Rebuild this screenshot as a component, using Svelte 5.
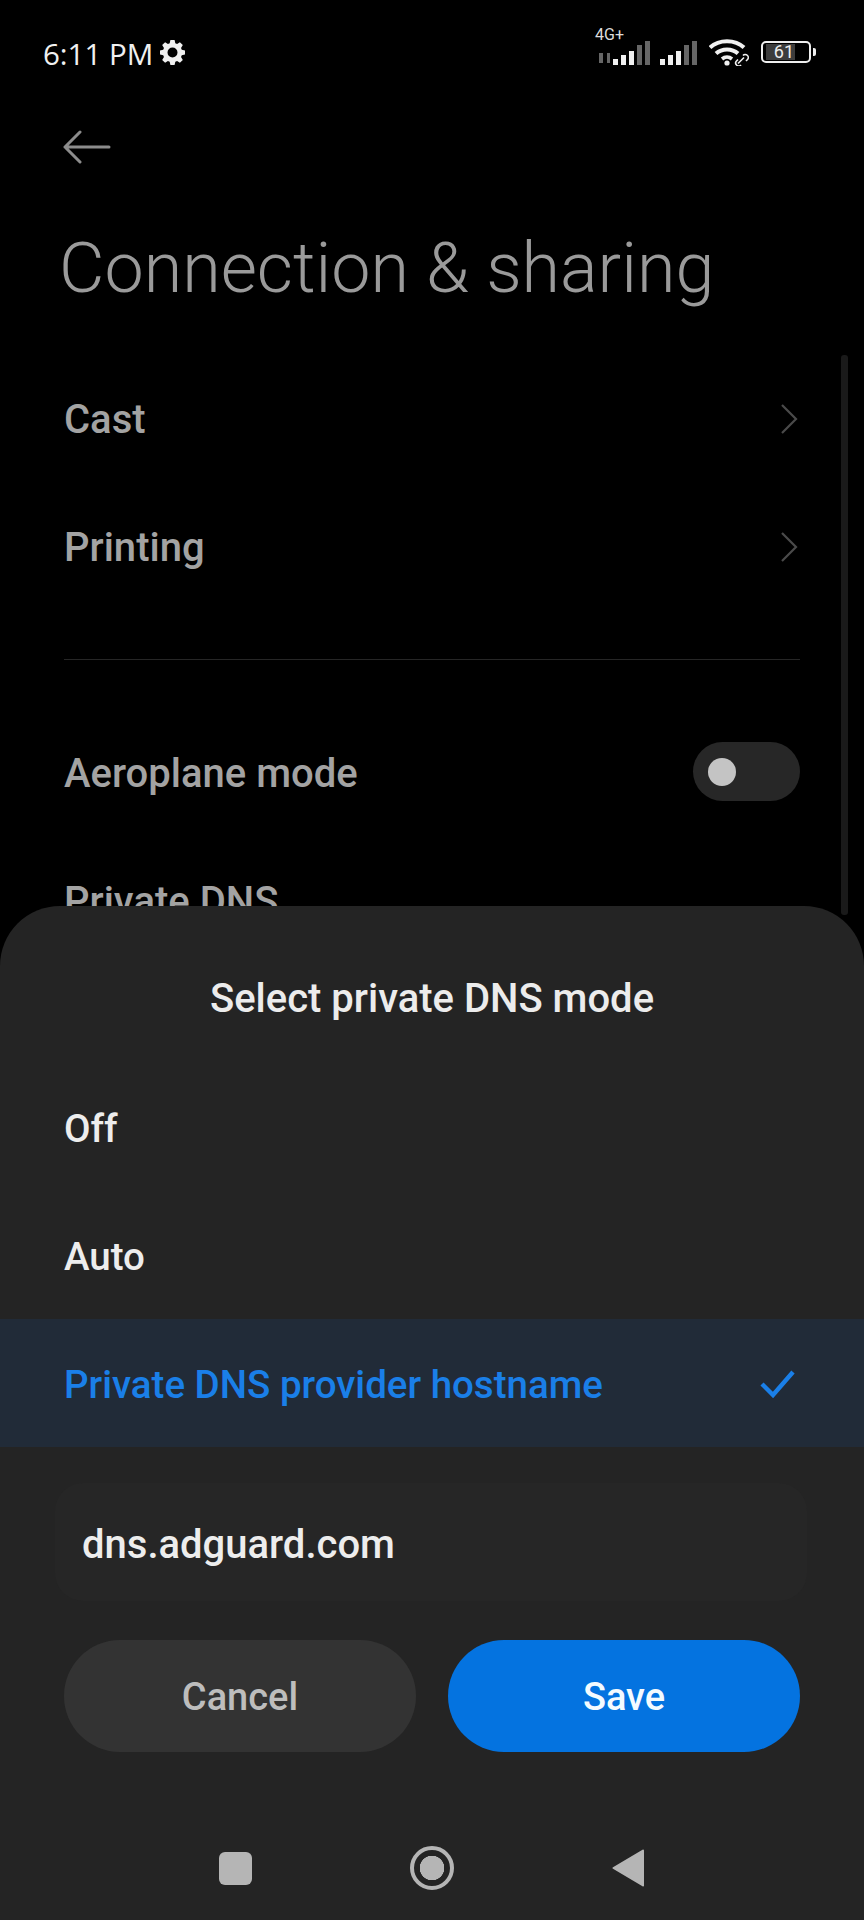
<script>
	const rows = [{ label: 'Cast' }, { label: 'Printing' }];
	const modes = [
		{ label: 'Off', selected: false },
		{ label: 'Auto', selected: false },
		{ label: 'Private DNS provider hostname', selected: true }
	];
	const bars = [6, 10, 14, 20, 24];
</script>

<div class="screen">
	<header class="status">
		<span class="time">6:11 PM</span>
		<svg class="gear" width="25" height="25" viewBox="0 0 24 24" fill="#f0f0f0">
			<path
				fill-rule="evenodd"
				d="M10 0h4l.7 3.100 1.700.7 2.700-1.700 2.800 2.800-1.700 2.700.7 1.700L24 10v4l-3.100.7-.7 1.700 1.700 2.700-2.800 2.800-2.700-1.700-1.700.7L14 24h-4l-.7-3.100-1.700-.7-2.700 1.700-2.800-2.800 1.700-2.700-.7-1.700L0 14v-4l3.100-.7.7-1.700L2.100 4.900l2.800-2.800 2.700 1.700 1.700-.7L10 0zM12 7.200a4.800 4.800 0 1 0 0 9.600a4.800 4.800 0 0 0 0-9.600z"
			/>
		</svg>
		<div class="status-right">
			<div class="signal">
				<span class="net">4G+</span>
				<svg class="arrows" width="15" height="12" viewBox="0 0 15 12" fill="#666">
					<rect x="1" y="1" width="4" height="10" />
					<rect x="9" y="1" width="3" height="10" />
				</svg>
				<div class="bars">
					{#each bars as h, i}
						<i class:dim={i > 2} style="height: {h}px"></i>
					{/each}
				</div>
			</div>
			<div class="bars second">
				{#each bars as h, i}
					<i class:dim={i > 2} style="height: {h}px"></i>
				{/each}
			</div>
			<svg class="wifi" width="40" height="28" viewBox="0 0 40 28" fill="none" stroke="#f0f0f0">
				<path d="M1 9.500C10 1 26 1 35 9.500" stroke-width="4" />
				<path d="M7 15.500C13 10 23 10 29 15.500" stroke-width="4" />
				<path d="M13 21C16 18.500 20 18.500 23 21" stroke-width="3.600" />
				<circle cx="18" cy="25" r="2.600" fill="#f0f0f0" stroke="none" />
				<path d="M29 25.500l6-6M32 27a3 3 0 0 1-4.500-4l1.500-1.500M34 17.500a3 3 0 0 1 4.500 4L37 23" stroke-width="1.600" />
			</svg>
			<div class="battery">
				<div class="cell"><span>61</span></div>
				<i class="nub"></i>
			</div>
		</div>
	</header>

	<main class="page">
		<button class="back" aria-label="Back">
			<svg width="48" height="34" viewBox="0 0 48 34" fill="none" stroke="#8c8c8c" stroke-width="3" stroke-linecap="round" stroke-linejoin="round">
				<path d="M2 17h44M17 2L2 17l15 15" />
			</svg>
		</button>
		<h1>Connection &amp; sharing</h1>

		<section class="list">
			{#each rows as row}
				<div class="row">
					<span>{row.label}</span>
					<svg width="20" height="32" viewBox="0 0 20 32" fill="none" stroke="#4a4a4a" stroke-width="2.200">
						<path d="M3 2l14 14L3 30" />
					</svg>
				</div>
			{/each}
		</section>

		<hr />

		<section class="list">
			<div class="row">
				<span>Aeroplane mode</span>
				<div class="toggle"><i></i></div>
			</div>
			<div class="row"><span>Private DNS</span></div>
		</section>
	</main>

	<i class="scrollbar"></i>

	<div class="sheet">
		<h2>Select private DNS mode</h2>
		<div class="modes">
			{#each modes as mode}
				<div class="mode" class:selected={mode.selected}>
					<span>{mode.label}</span>
					{#if mode.selected}
						<svg width="36" height="28" viewBox="0 0 36 28" fill="none" stroke="#1a7fe8" stroke-width="4.400">
							<path d="M2 14l11 11L33 2" />
						</svg>
					{/if}
				</div>
			{/each}
		</div>
		<div class="field">dns.adguard.com</div>
		<div class="actions">
			<button class="cancel">Cancel</button>
			<button class="save">Save</button>
		</div>
		<nav class="nav">
			<i class="recents"></i>
			<i class="home"></i>
			<svg width="32" height="38" viewBox="0 0 32 38" fill="#b5b5b5" stroke="#b5b5b5" stroke-width="2" stroke-linejoin="round">
				<path d="M31 1.500L1.500 19 31 36.500z" />
			</svg>
		</nav>
	</div>
</div>

<style>
	:global(body) {
		background: #000;
	}

	.screen {
		position: relative;
		width: 864px;
		height: 1920px;
		overflow: hidden;
		background: #000;
		font-family: Roboto, 'Liberation Sans', sans-serif;
	}

	.status {
		display: flex;
		align-items: center;
		height: 30px;
		padding: 38px 48px 0 43px;
		color: #f0f0f0;
	}

	.time {
		font-family: 'Open Sans', sans-serif;
		font-size: 29.500px;
		font-weight: 500;
	}

	.gear {
		margin: 0 0 2px 7px;
	}

	.status-right {
		display: flex;
		align-items: flex-end;
		margin-left: auto;
		height: 30px;
		padding-bottom: 3px;
		box-sizing: border-box;
	}

	.signal {
		position: relative;
		display: flex;
		align-items: flex-end;
	}

	.net {
		position: absolute;
		top: -14px;
		left: -3px;
		font-size: 16px;
		line-height: 16px;
		color: #ddd;
	}

	.arrows {
		margin-bottom: 1px;
	}

	.bars {
		display: flex;
		align-items: flex-end;
		gap: 3px;
	}

	.bars i {
		width: 5px;
		background: #f0f0f0;
	}

	.bars i.dim {
		background: #666;
	}

	.second {
		margin-left: 10px;
	}

	.wifi {
		margin: 0 0 -1px 12px;
	}

	.battery {
		display: flex;
		align-items: center;
		margin: 0 0 2px 12px;
	}

	.cell {
		width: 50px;
		height: 22px;
		box-sizing: border-box;
		border: 2px solid #eee;
		border-radius: 5px;
		padding: 1px 3px;
		display: flex;
		font-size: 18px;
		line-height: 16px;
		color: #eee;
	}

	.cell span {
		width: 28px;
		padding-right: 1px;
		text-align: right;
		background: #3c3c3c;
	}

	.nub {
		width: 3px;
		height: 8px;
		margin-left: 2px;
		background: #eee;
		border-radius: 0 2px 2px 0;
	}

	.page {
		padding: 0 64px;
	}

	.back {
		display: block;
		margin: 62px 0 0 -1px;
		padding: 0;
		background: none;
		border: 0;
	}

	h1 {
		margin: 61px 0 47px -5px;
		font-size: 70px;
		line-height: 80px;
		font-weight: 300;
		white-space: nowrap;
		color: #9a9a9a;
	}

	.list {
		display: flex;
		flex-direction: column;
	}

	.row {
		display: flex;
		align-items: center;
		justify-content: space-between;
		height: 128px;
		font-size: 40px;
		font-weight: 500;
		color: #a3a3a3;
	}

	.row svg {
		margin-right: 1px;
	}

	hr {
		margin: 48px 0 49px;
		height: 1px;
		border: 0;
		background: #262626;
	}

	.toggle {
		display: flex;
		align-items: center;
		width: 107px;
		height: 59px;
		margin-bottom: 3px;
		padding-left: 15px;
		box-sizing: border-box;
		border-radius: 30px;
		background: #272727;
	}

	.toggle i {
		width: 28px;
		height: 28px;
		border-radius: 50%;
		background: #c4c4c4;
	}

	.scrollbar {
		position: absolute;
		top: 355px;
		right: 16px;
		width: 7px;
		height: 560px;
		border-radius: 3px;
		background: #1a1a1a;
	}

	.sheet {
		position: absolute;
		left: 0;
		right: 0;
		top: 906px;
		bottom: 0;
		border-radius: 60px 60px 0 0;
		background: #242424;
		display: flex;
		flex-direction: column;
	}

	h2 {
		margin: 0;
		padding-top: 69px;
		font-size: 40px;
		line-height: 48px;
		font-weight: 500;
		text-align: center;
		color: #ececec;
	}

	.modes {
		margin-top: 40px;
	}

	.mode {
		display: flex;
		align-items: center;
		justify-content: space-between;
		height: 128px;
		padding: 2px 68px 0 64px;
		box-sizing: border-box;
		font-size: 38.500px;
		font-weight: 500;
		color: #ededed;
	}

	.mode.selected {
		background: #212b38;
		color: #1a7fe8;
	}

	.field {
		margin: 36px 57px 0 55px;
		height: 118px;
		padding: 4px 0 0 27px;
		box-sizing: border-box;
		border-radius: 28px;
		background: #262626;
		display: flex;
		align-items: center;
		font-size: 40px;
		font-weight: 500;
		color: #ededed;
	}

	.actions {
		display: flex;
		gap: 32px;
		margin-top: 39px;
		padding: 0 64px;
	}

	.actions button {
		flex: 1;
		height: 112px;
		padding-top: 2px;
		border: 0;
		border-radius: 56px;
		font-family: inherit;
		font-size: 38px;
		font-weight: 500;
	}

	.cancel {
		background: #333;
		color: #bdbdbd;
	}

	.save {
		background: #0473e0;
		color: #f4fbff;
	}

	.nav {
		display: flex;
		align-items: center;
		justify-content: space-between;
		margin-top: 93px;
		padding: 0 220px 0 219px;
		height: 46px;
	}

	.recents {
		width: 33px;
		height: 33px;
		border-radius: 6px;
		background: #b5b5b5;
	}

	.home {
		width: 44px;
		height: 44px;
		box-sizing: border-box;
		border: 4px solid #b5b5b5;
		border-radius: 50%;
		background: radial-gradient(circle, #b5b5b5 0 12px, transparent 12.500px);
	}
</style>
